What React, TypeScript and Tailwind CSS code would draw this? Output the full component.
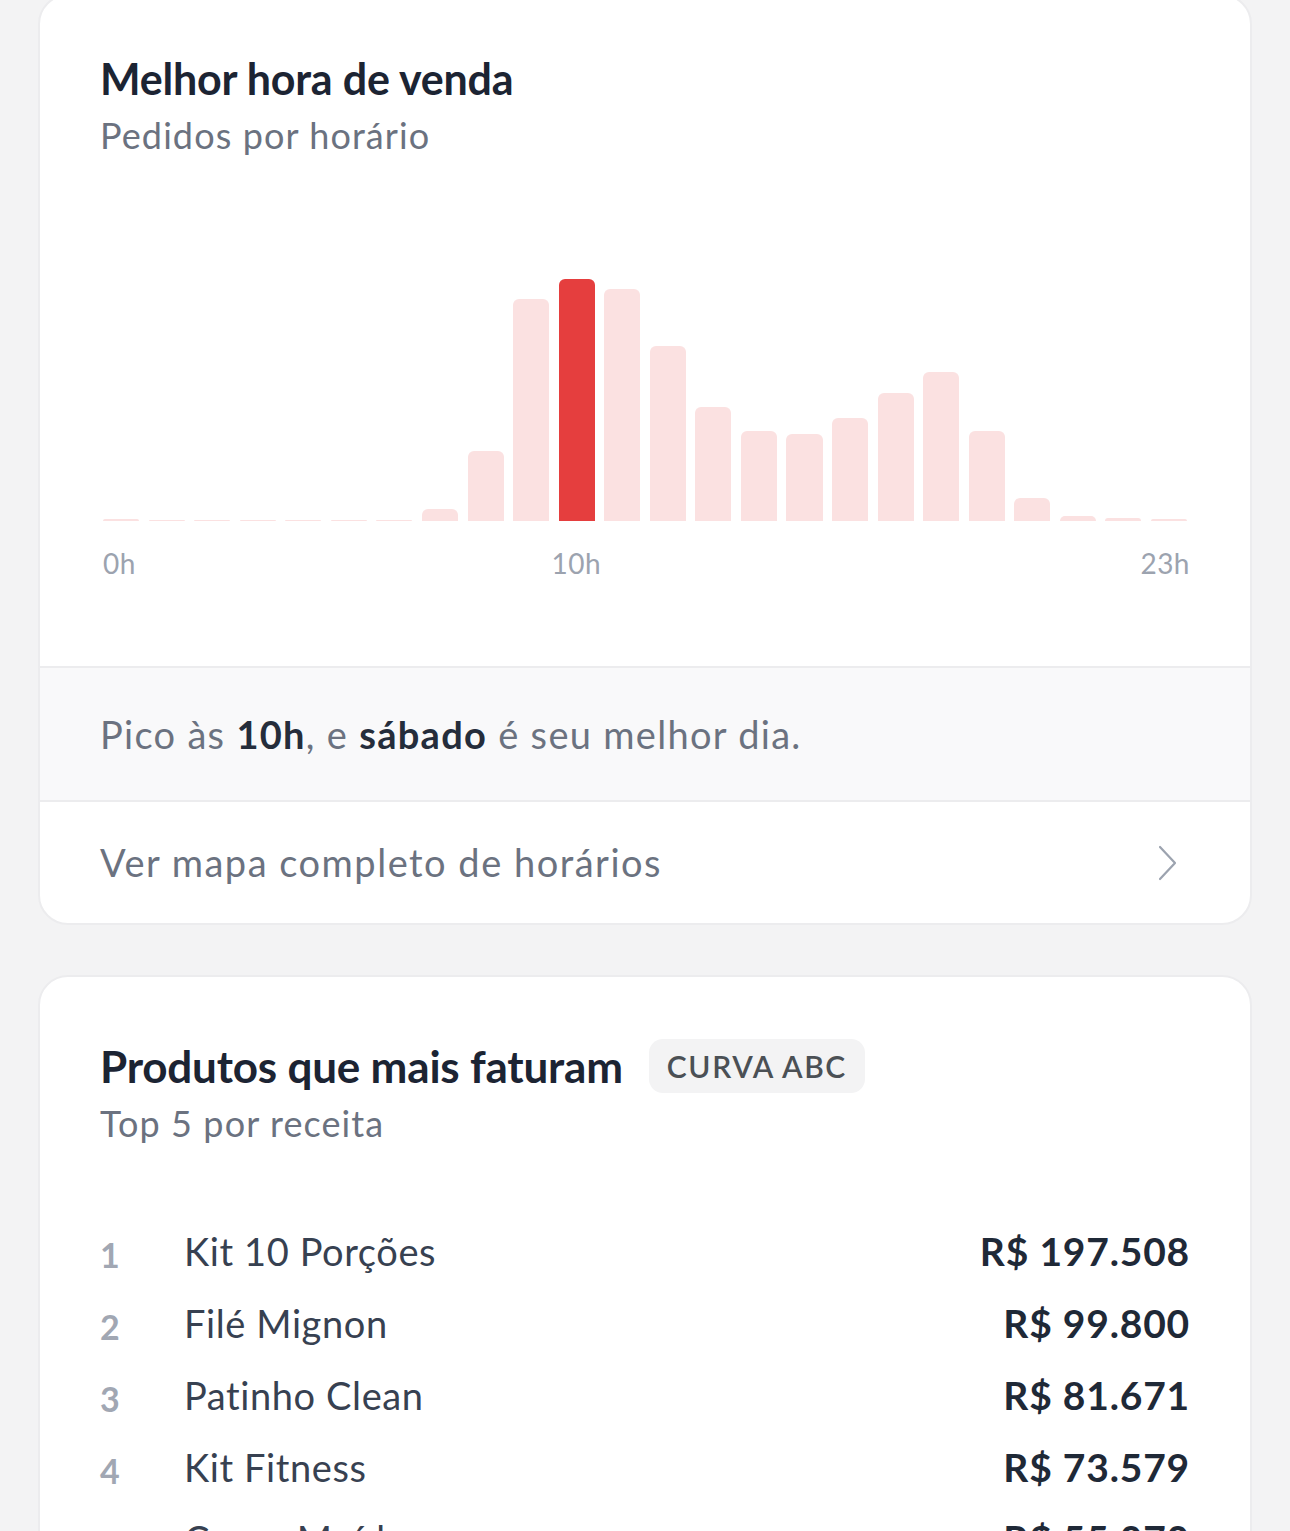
import React from 'react'

const hours = [2, 1, 1, 1, 1, 1, 1, 12, 70, 222, 242, 232, 175, 114, 90, 87, 103, 128, 149, 90, 23, 5, 3, 2]
const peak = 10

const products = [
  { name: 'Kit 10 Porções', value: 'R$ 197.508' },
  { name: 'Filé Mignon', value: 'R$ 99.800' },
  { name: 'Patinho Clean', value: 'R$ 81.671' },
  { name: 'Kit Fitness', value: 'R$ 73.579' },
  { name: 'Carne Moída', value: 'R$ 55.070' },
]

function HourChart() {
  return (
    <div className="mt-[106px] px-[3px]">
      <div className="grid h-[260px] grid-cols-24 items-end gap-x-[9.5px]">
        {hours.map((h, i) => (
          <div
            key={i}
            className={i === peak ? 'rounded-t-[6px] bg-[#e53e3e]' : 'rounded-t-[6px] bg-[#fbe1e1]'}
            style={{ height: h }}
          />
        ))}
      </div>
      <div className="-mx-[3px] mt-[26px] grid grid-cols-24 gap-x-[9.5px] text-[28px] leading-[32px] tracking-[0.5px] text-[#9ca3af]">
        <div className="col-span-10 pl-[3px]">0h</div>
        <div className="col-span-1 -mx-4 text-center">10h</div>
        <div className="col-span-13 text-right">23h</div>
      </div>
    </div>
  )
}

export default function App() {
  return (
    <div
      className="min-h-[1531px] overflow-hidden bg-[#f3f3f4] px-[38px] pb-10"
      style={{ fontFamily: 'Lato, "Noto Sans", sans-serif' }}
    >
      <div className="-mt-[6px] overflow-hidden rounded-[30px] border-2 border-[#ececee] bg-white">
        <div className="px-[60px] pb-[87px] pt-[57px]">
          <h2 className="text-[43px] font-bold leading-[52px] tracking-[-0.2px] text-[#1c2433]">Melhor hora de venda</h2>
          <p className="mt-[10px] text-[36px] leading-[40px] tracking-[1.1px] text-[#6b7280]">Pedidos por horário</p>
          <HourChart />
        </div>
        <div className="flex h-[136px] items-center border-y-2 border-[#ececee] bg-[#f9f9fa] px-[60px]">
          <p className="text-[38px] tracking-[1.3px] text-[#6b7280]">
            Pico às <span className="font-bold text-[#252d3b]">10h</span>, e{' '}
            <span className="font-bold text-[#252d3b]">sábado</span> é seu melhor dia.
          </p>
        </div>
        <div className="flex h-[121px] items-center justify-between pl-[60px] pr-[67px]">
          <span className="text-[38px] tracking-[1.5px] text-[#6b7280]">Ver mapa completo de horários</span>
          <svg width="40" height="40" viewBox="0 0 40 40" fill="none" className="-mr-1">
            <polyline points="13,4 28,20 13,36" stroke="#9ca3af" strokeWidth="2.2" strokeLinecap="round" strokeLinejoin="round" />
          </svg>
        </div>
      </div>

      <div className="mt-[50px] rounded-[30px] border-2 border-[#ececee] bg-white px-[60px] pb-10 pt-[62px]">
        <div className="flex h-[54px] items-center gap-[26px]">
          <h2 className="text-[44px] font-bold leading-[52px] tracking-[-0.2px] text-[#1c2433]">Produtos que mais faturam</h2>
          <span className="rounded-[14px] bg-[#f3f3f4] px-[18px] py-[8px] text-[30px] font-semibold leading-[38px] tracking-[1.6px] text-[#4b5055]">
            CURVA ABC
          </span>
        </div>
        <p className="mt-[10px] text-[36px] leading-[40px] tracking-[1.1px] text-[#6b7280]">Top 5 por receita</p>
        <div className="mt-[72px]">
          {products.map((p, i) => (
            <div key={p.name} className="flex h-[72px] items-center">
              <span className="w-[84px] pt-[6px] text-[34px] font-bold text-[#a1a7b3]">{i + 1}</span>
              <span className="flex-1 text-[38px] tracking-[0.6px] text-[#374151]">{p.name}</span>
              <span className="text-[39px] font-bold tracking-[0.8px] text-[#1f2937]">{p.value}</span>
            </div>
          ))}
        </div>
      </div>
    </div>
  )
}
